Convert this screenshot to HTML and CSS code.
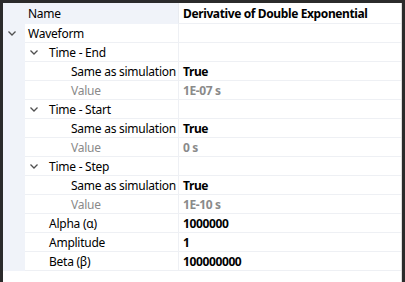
FILE: index.html
```html
<!DOCTYPE html>
<html>
<head>
<meta charset="utf-8">
<link rel="stylesheet" href="styles.css">
</head>
<body>
<div class="frame">
  <div class="grid">
    <div class="row head">
      <div class="gut"></div>
      <div class="name">Name</div>
      <div class="val b">Derivative of Double Exponential</div>
    </div>
    <div class="row">
      <div class="gut"><svg class="chev" viewBox="0 0 8 5"><path d="M0.5 0.5 L4 4 L7.5 0.5"/></svg></div>
      <div class="name l0">Waveform</div>
      <div class="val"></div>
    </div>
    <div class="row">
      <div class="gut"></div>
      <div class="name l1"><svg class="chev" viewBox="0 0 8 5"><path d="M0.5 0.5 L4 4 L7.5 0.5"/></svg>Time - End</div>
      <div class="val"></div>
    </div>
    <div class="row">
      <div class="gut"></div>
      <div class="name l2">Same as simulation</div>
      <div class="val b">True</div>
    </div>
    <div class="row">
      <div class="gut"></div>
      <div class="name l2 dim">Value</div>
      <div class="val b dim">1E-07 s</div>
    </div>
    <div class="row">
      <div class="gut"></div>
      <div class="name l1"><svg class="chev" viewBox="0 0 8 5"><path d="M0.5 0.5 L4 4 L7.5 0.5"/></svg>Time - Start</div>
      <div class="val"></div>
    </div>
    <div class="row">
      <div class="gut"></div>
      <div class="name l2">Same as simulation</div>
      <div class="val b">True</div>
    </div>
    <div class="row">
      <div class="gut"></div>
      <div class="name l2 dim">Value</div>
      <div class="val b dim">0 s</div>
    </div>
    <div class="row">
      <div class="gut"></div>
      <div class="name l1"><svg class="chev" viewBox="0 0 8 5"><path d="M0.5 0.5 L4 4 L7.5 0.5"/></svg>Time - Step</div>
      <div class="val"></div>
    </div>
    <div class="row">
      <div class="gut"></div>
      <div class="name l2">Same as simulation</div>
      <div class="val b">True</div>
    </div>
    <div class="row">
      <div class="gut"></div>
      <div class="name l2 dim">Value</div>
      <div class="val b dim">1E-10 s</div>
    </div>
    <div class="row">
      <div class="gut"></div>
      <div class="name l1 leaf">Alpha (α)</div>
      <div class="val b">1000000</div>
    </div>
    <div class="row">
      <div class="gut"></div>
      <div class="name l1 leaf">Amplitude</div>
      <div class="val b">1</div>
    </div>
    <div class="row">
      <div class="gut"></div>
      <div class="name l1 leaf">Beta (β)</div>
      <div class="val b">100000000</div>
    </div>
  </div>
</div>
</body>
</html>
```
FILE: styles.css
```css
html, body {
  margin: 0;
  padding: 0;
  background: #ffffff;
}
.frame {
  width: 405px;
  height: 282px;
  box-sizing: border-box;
  border-top: 3px solid #2b2b2b;
  border-left: 3px solid #2b2b2b;
  border-right: 3px solid #2b2b2b;
  background: #ffffff;
  font-family: "Noto Sans", "Open Sans", sans-serif;
  font-size: 12px;
  letter-spacing: -0.25px;
  color: #000000;
}
.grid {
  display: flex;
  flex-direction: column;
  border-right: 1px solid #dcdcdc;
  height: 100%;
  box-sizing: border-box;
}
.row {
  display: flex;
  height: 19px;
  box-sizing: border-box;
  align-items: stretch;
}
.row.head {
  height: 21px;
}
.gut {
  width: 22px;
  flex: none;
  background: #f0f3f9;
  display: flex;
  align-items: center;
  justify-content: center;
}
.gut .chev {
  margin-left: -4px;
}
.name {
  width: 154px;
  flex: none;
  box-sizing: border-box;
  border-right: 1px solid #eef0f4;
  border-bottom: 1px solid #eef0f4;
  display: flex;
  align-items: center;
  white-space: nowrap;
  padding-left: 3px;
}
.head .name {
  background: #f0f3f9;
  border-bottom-color: #f0f3f9;
  border-right-color: #e8ebf0;
}
.val {
  flex: 1;
  border-bottom: 1px solid #eef0f4;
  display: flex;
  align-items: center;
  padding-left: 4px;
  white-space: nowrap;
}
.b {
  font-weight: bold;
  letter-spacing: -0.38px;
}
.dim {
  color: #8a8a8a;
}
.l0 {
  padding-left: 3px;
}
.l1 {
  padding-left: 5px;
}
.l1.leaf {
  padding-left: 24px;
}
.l2 {
  padding-left: 46px;
}
.chev {
  width: 8px;
  height: 5px;
  fill: none;
  stroke: #505050;
  stroke-width: 1.3;
  flex: none;
}
.l1 .chev {
  margin-right: 11px;
}
```
